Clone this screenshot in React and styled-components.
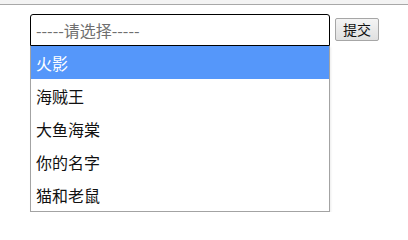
import { useState } from "react";
import styled, { createGlobalStyle } from "styled-components";

const Global = createGlobalStyle`
  body {
    margin: 0;
    background: #fff;
    font-family: "Microsoft YaHei", "Noto Sans CJK SC", "Noto Sans", sans-serif;
  }
`;

const TopBar = styled.div`
  height: 4px;
  background: #f3f3f3;
  border-bottom: 1px solid #a8a8a8;
`;

const Form = styled.form`
  display: flex;
  align-items: flex-start;
  gap: 5px;
  padding: 9px 0 0 30px;
`;

const Field = styled.div`
  display: flex;
  flex-direction: column;
  width: 300px;
`;

const Input = styled.input`
  box-sizing: border-box;
  width: 300px;
  height: 32px;
  margin: 0;
  padding: 0 5px;
  border: 1px solid #000;
  border-radius: 3px 3px 0 0;
  font: inherit;
  font-size: 16px;
  color: #222;
  outline: none;

  &::placeholder {
    color: #6f6f6f;
  }
`;

const Submit = styled.button`
  height: 23px;
  margin: 4px 0 0;
  padding: 0 7px;
  border: 1px solid #a6a6a6;
  border-radius: 2px;
  background: linear-gradient(#f4f4f4, #e0e0e0);
  font: inherit;
  font-size: 14px;
  color: #111;
  line-height: 19px;
`;

const Menu = styled.ul`
  box-sizing: border-box;
  width: 300px;
  margin: 0;
  padding: 0;
  list-style: none;
  background: #fff;
  border: 1px solid #a3a3a3;
  border-top: none;
  box-shadow: 1px 1px 2px rgba(0, 0, 0, 0.08);
`;

const Item = styled.li`
  height: 33px;
  display: flex;
  align-items: center;
  padding-left: 5px;
  font-size: 16px;
  color: ${(p) => (p.$active ? "#fff" : "#111")};
  background: ${(p) => (p.$active ? "#5597fa" : "transparent")};
`;

const films = ["火影", "海贼王", "大鱼海棠", "你的名字", "猫和老鼠"];

const App = () => {
  const [active, setActive] = useState(0);

  return (
    <>
      <Global />
      <TopBar />
      <Form onSubmit={(e) => e.preventDefault()}>
        <Field>
          <Input placeholder="-----请选择-----" />
          <Menu>
            {films.map((name, index) => (
              <Item key={name} $active={index === active} onMouseEnter={() => setActive(index)}>
                {name}
              </Item>
            ))}
          </Menu>
        </Field>
        <Submit type="submit">提交</Submit>
      </Form>
    </>
  );
};

export default App;
